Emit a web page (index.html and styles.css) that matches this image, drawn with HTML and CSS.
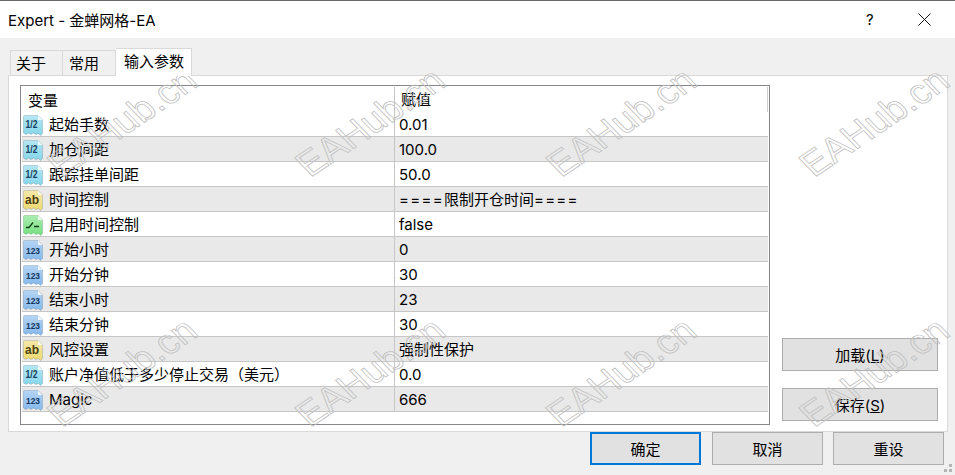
FILE: index.html
```html
<!DOCTYPE html>
<html>
  <head>
    <meta charset="UTF-8">
    <title>Expert - 金蝉网格-EA</title>
    <link rel="stylesheet" href="styles.css">
  </head>
  <body>
    <svg class="defs" width="0" height="0">
      <defs>
        <linearGradient id="sheen" x1="0" y1="0" x2="0" y2="1">
          <stop offset="0" stop-color="#fff" stop-opacity=".4"/>
          <stop offset="1" stop-color="#fff" stop-opacity="0"/>
        </linearGradient>
      </defs>
      <symbol id="page" viewBox="0 0 20 21">
        <path d="M.5 1.500 Q.5 .5 1.500 .5 H15 L19.500 5 V18.500 L17.500 20.500 L15.500 18.500 L13 19.500 L10.500 18 L8 19.500 L5.500 18 L3 19.500 L.5 18 Z" fill="currentColor" stroke="rgba(70,90,110,.35)" stroke-width=".7"/>
        <path d="M.5 1.500 Q.5 .5 1.500 .5 H15 L19.500 5 V18.500 L17.500 20.500 L15.500 18.500 L13 19.500 L10.500 18 L8 19.500 L5.500 18 L3 19.500 L.5 18 Z" fill="url(#sheen)"/>
        <path d="M15 .8 V5 H19.200 Z" fill="#fff" opacity=".85"/>
      </symbol>
    </svg>

    <div class="titlebar">
      <span class="title">Expert - 金蝉网格-EA</span>
      <span class="help">?</span>
      <svg class="close" width="13" height="13" viewBox="0 0 13 13"><path d="M.5 .5 L12.500 12.500 M12.500 .5 L.5 12.500" stroke="#111" stroke-width="1" fill="none"/></svg>
    </div>

    <div class="tabs">
      <div class="tab">关于</div>
      <div class="tab">常用</div>
      <div class="tab active">输入参数</div>
    </div>

    <div class="panel">
      <div class="grid">
        <div class="row head">
          <div class="name">变量</div>
          <div class="value">赋值</div>
        </div>
        <div class="row"><div class="name"><svg class="icon half"><use href="#page"/><text x="8.500" y="12.500" textLength="12" lengthAdjust="spacingAndGlyphs">1/2</text></svg>起始手数</div><div class="value">0.01</div></div>
        <div class="row"><div class="name"><svg class="icon half"><use href="#page"/><text x="8.500" y="12.500" textLength="12" lengthAdjust="spacingAndGlyphs">1/2</text></svg>加仓间距</div><div class="value">100.0</div></div>
        <div class="row"><div class="name"><svg class="icon half"><use href="#page"/><text x="8.500" y="12.500" textLength="12" lengthAdjust="spacingAndGlyphs">1/2</text></svg>跟踪挂单间距</div><div class="value">50.0</div></div>
        <div class="row"><div class="name"><svg class="icon str"><use href="#page"/><text x="9" y="13.500">ab</text></svg>时间控制</div><div class="value"><span class="eq">====</span>限制开仓时间<span class="eq">====</span></div></div>
        <div class="row"><div class="name"><svg class="icon bool"><use href="#page"/><path d="M3 12.500 H6 L10 7.500 M11 11.500 H16" stroke="#143c14" stroke-width="1.300" fill="none"/></svg>启用时间控制</div><div class="value">false</div></div>
        <div class="row"><div class="name"><svg class="icon int"><use href="#page"/><text x="10" y="14" textLength="14" lengthAdjust="spacingAndGlyphs">123</text></svg>开始小时</div><div class="value">0</div></div>
        <div class="row"><div class="name"><svg class="icon int"><use href="#page"/><text x="10" y="14" textLength="14" lengthAdjust="spacingAndGlyphs">123</text></svg>开始分钟</div><div class="value">30</div></div>
        <div class="row"><div class="name"><svg class="icon int"><use href="#page"/><text x="10" y="14" textLength="14" lengthAdjust="spacingAndGlyphs">123</text></svg>结束小时</div><div class="value">23</div></div>
        <div class="row"><div class="name"><svg class="icon int"><use href="#page"/><text x="10" y="14" textLength="14" lengthAdjust="spacingAndGlyphs">123</text></svg>结束分钟</div><div class="value">30</div></div>
        <div class="row"><div class="name"><svg class="icon str"><use href="#page"/><text x="9" y="13.500">ab</text></svg>风控设置</div><div class="value">强制性保护</div></div>
        <div class="row"><div class="name"><svg class="icon half"><use href="#page"/><text x="8.500" y="12.500" textLength="12" lengthAdjust="spacingAndGlyphs">1/2</text></svg>账户净值低于多少停止交易（美元）</div><div class="value">0.0</div></div>
        <div class="row"><div class="name"><svg class="icon int"><use href="#page"/><text x="10" y="14" textLength="14" lengthAdjust="spacingAndGlyphs">123</text></svg>Magic</div><div class="value">666</div></div>
      </div>
      <div class="side">
        <button class="btn">加载(<u>L</u>)</button>
        <button class="btn">保存(<u>S</u>)</button>
      </div>
    </div>

    <div class="footer">
      <button class="btn wide default">确定</button>
      <button class="btn wide cancel">取消</button>
      <button class="btn wide">重设</button>
      <svg class="grip" width="9" height="9"><path d="M5 0h3v3h-3z M0 5h3v3h-3z M5 5h3v3h-3z" fill="#b4b4b4"/></svg>
    </div>

    <div class="marks">
      <span>EAHub.cn</span><span>EAHub.cn</span><span>EAHub.cn</span><span>EAHub.cn</span>
      <span>EAHub.cn</span><span>EAHub.cn</span><span>EAHub.cn</span><span>EAHub.cn</span>
    </div>
  </body>
</html>
```

FILE: styles.css
```css
html, body {
  margin: 0;
  height: 100%;
}

body {
  position: relative;
  width: 955px;
  height: 475px;
  overflow: hidden;
  background-color: #f0f0f0;
  color: #000;
  font-family: Inter, "Noto Sans CJK SC", sans-serif;
  font-size: 15px;
}

.defs {
  position: absolute;
}

.titlebar {
  display: flex;
  align-items: center;
  height: 37px;
  padding-left: 8px;
  background-color: #fff;
  border-top: 1px solid #6a6a6a;
}

.title {
  flex: 1;
}

.help {
  width: 14px;
  margin-right: 38px;
  font-size: 15px;
}

.close {
  margin-right: 24px;
}

.tabs {
  display: flex;
  align-items: flex-end;
  height: 37px;
  padding-left: 10px;
}

.tab {
  box-sizing: border-box;
  width: 53px;
  height: 25px;
  padding-left: 6px;
  line-height: 25px;
  border: 1px solid #d9d9d9;
  border-bottom: none;
  border-left: none;
  background-color: #f0f0f0;
}

.tab:first-child {
  padding-left: 5px;
  border-left: 1px solid #d9d9d9;
}

.tab.active {
  position: relative;
  z-index: 1;
  width: 76px;
  height: 28px;
  margin-bottom: -1px;
  padding-left: 8px;
  background-color: #fff;
}

.panel {
  box-sizing: border-box;
  display: flex;
  width: 940px;
  height: 357px;
  margin-left: 8px;
  padding: 9px 9px 7px 11px;
  background-color: #fff;
  border: 1px solid #d9d9d9;
}

.grid {
  box-sizing: border-box;
  width: 751px;
  height: 340px;
  padding: 1px;
  border: 1px solid #85878c;
}

.row {
  display: flex;
  box-sizing: border-box;
  height: 25px;
  line-height: 26px;
  border-bottom: 1px solid #c6c6c6;
}

.row:nth-child(odd) {
  background-color: #e9e9e9;
}

.row.head {
  background-color: #fff;
  border-bottom: none;
  border-right: 1px solid #d0d0d0;
}

.name {
  display: flex;
  align-items: center;
  width: 372px;
  padding: 2px 0 0 1px;
  box-sizing: border-box;
  white-space: nowrap;
}

.head .name {
  padding-left: 6px;
}

.value {
  flex: 1;
  padding-left: 4px;
  border-left: 1px solid #c6c6c6;
}

.head .value {
  padding-left: 6px;
}

.eq {
  letter-spacing: 1.3px;
}

.icon {
  flex: none;
  width: 20px;
  height: 21px;
  margin-right: 6px;
}

.icon text {
  font-family: "Liberation Sans", sans-serif;
  font-size: 9px;
  font-weight: bold;
  text-anchor: middle;
}

.half {
  color: #84d6ea;
}

.half text {
  font-size: 10.500px;
  fill: #14405e;
}

.str {
  color: #eed970;
}

.str text {
  font-size: 12px;
  fill: #4a3f10;
}

.bool {
  color: #74e07e;
}

.int {
  color: #84b8ec;
}

.int text {
  fill: #12365e;
}

.side {
  display: flex;
  flex-direction: column;
  gap: 17px;
  margin-top: 253px;
  margin-left: 12px;
}

.btn {
  box-sizing: border-box;
  width: 156px;
  height: 33px;
  padding: 0;
  font: inherit;
  color: #000;
  background-color: #e1e1e1;
  border: 1px solid #adadad;
}

.footer {
  display: flex;
  gap: 10px;
  padding-left: 590px;
}

.btn.wide {
  width: 111px;
}

.btn.default {
  border: 2px solid #0078d7;
}

.btn.cancel {
  margin-left: 1px;
}

.grip {
  position: absolute;
  right: 2px;
  bottom: 2px;
}

.marks {
  position: absolute;
  top: 0;
  left: 0;
  width: 955px;
  height: 475px;
  pointer-events: none;
}

.marks span {
  position: absolute;
  font-family: "Liberation Sans", sans-serif;
  font-size: 37px;
  line-height: 40px;
  color: transparent;
  -webkit-text-stroke: .8px #c0c0c0;
  transform: rotate(-34deg) skewX(10deg);
  transform-origin: 0 32px;
}

.marks span:nth-child(1) { left: 62px; top: 146px; }
.marks span:nth-child(2) { left: 310px; top: 146px; }
.marks span:nth-child(3) { left: 561px; top: 146px; }
.marks span:nth-child(4) { left: 814px; top: 146px; }
.marks span:nth-child(5) { left: 62px; top: 396px; }
.marks span:nth-child(6) { left: 310px; top: 396px; }
.marks span:nth-child(7) { left: 561px; top: 396px; }
.marks span:nth-child(8) { left: 814px; top: 396px; }
```
